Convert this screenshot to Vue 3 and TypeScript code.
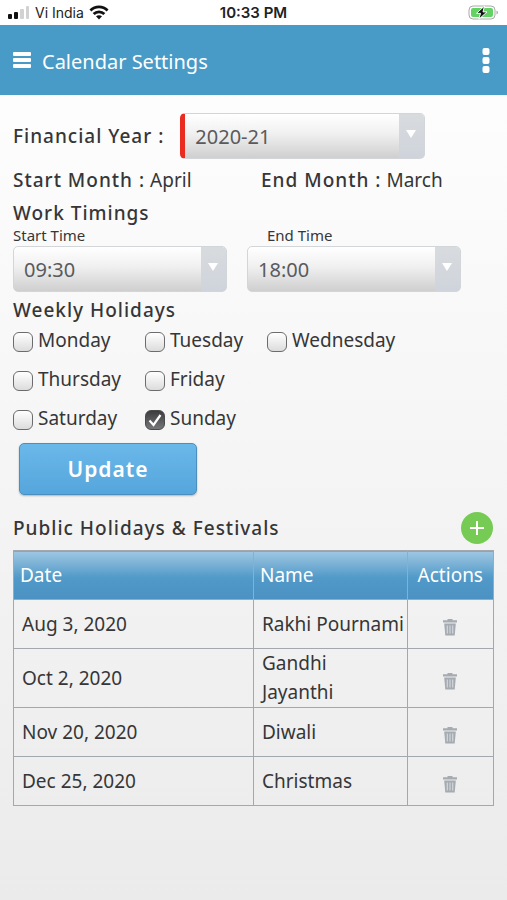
<script setup lang="ts">
import { ref } from 'vue'

interface Day {
  name: string
  checked: boolean
}

interface Holiday {
  date: string
  name: string
}

const year = ref('2020-21')
const startTime = ref('09:30')
const endTime = ref('18:00')

const days = ref<Day[]>([
  { name: 'Monday', checked: false },
  { name: 'Tuesday', checked: false },
  { name: 'Wednesday', checked: false },
  { name: 'Thursday', checked: false },
  { name: 'Friday', checked: false },
  { name: 'Saturday', checked: false },
  { name: 'Sunday', checked: true },
])

const holidays = ref<Holiday[]>([
  { date: 'Aug 3, 2020', name: 'Rakhi Pournami' },
  { date: 'Oct 2, 2020', name: 'Gandhi\nJayanthi' },
  { date: 'Nov 20, 2020', name: 'Diwali' },
  { date: 'Dec 25, 2020', name: 'Christmas' },
])

function removeHoliday(index: number): void {
  holidays.value.splice(index, 1)
}
</script>

<template>
  <div class="screen">
    <div class="status">
      <div class="carrier">
        <svg class="signal" width="22" height="14" viewBox="0 0 22 14">
          <rect x="0" y="8" width="4" height="5" rx="1" fill="#111" />
          <rect x="6" y="6" width="4" height="7" rx="1" fill="#111" />
          <rect x="12" y="3" width="4" height="10" rx="1" fill="#d2d2d2" />
          <rect x="18" y="0" width="3" height="13" rx="1" fill="#d2d2d2" />
        </svg>
        <span>Vi India</span>
        <svg class="wifi" width="20" height="15" viewBox="0 0 18 14" fill="none" stroke="#111" stroke-width="2.6">
          <path d="M1 5.2C5.5.6 12.5.6 17 5.2" />
          <path d="M4 8.5C6.8 5.700 11.2 5.700 14 8.5" />
          <path d="M9 13.5 6.2 10.6C7.8 9.2 10.2 9.2 11.8 10.6Z" fill="#111" stroke="none" />
        </svg>
      </div>
      <span class="clock">10:33 PM</span>
      <svg class="battery" width="31" height="15" viewBox="0 0 31 15">
        <rect x="1" y="1" width="26" height="13" rx="4" fill="#fff" stroke="#a9a9a9" />
        <rect x="3" y="3" width="22" height="9" rx="2" fill="#62d263" />
        <path d="M28.5 5.5v4q1.5-.5 1.5-2t-1.500-2Z" fill="#a9a9a9" />
        <path d="M16.500 1 8.500 8.300h4l-1.700 6 8.200-7.400h-4Z" fill="#111" stroke="#fff" stroke-width="1" />
      </svg>
    </div>

    <header class="bar">
      <button class="icon-btn" type="button" aria-label="Menu">
        <svg width="18" height="16" viewBox="0 0 18 16" fill="#fff">
          <rect y="0" width="18" height="4" rx="1" />
          <rect y="6" width="18" height="4" rx="1" />
          <rect y="12" width="18" height="4" rx="1" />
        </svg>
      </button>
      <h1>Calendar Settings</h1>
      <button class="icon-btn more" type="button" aria-label="More options">
        <svg width="8" height="25" viewBox="0 0 8 25" fill="#fff">
          <rect x="0.500" y="0" width="7" height="7" rx="2" />
          <rect x="0.500" y="9" width="7" height="7" rx="2" />
          <rect x="0.500" y="18" width="7" height="7" rx="2" />
        </svg>
      </button>
    </header>

    <main>
      <div class="year-row">
        <label class="strong" for="year">Financial Year :</label>
        <div class="select required">
          <select id="year" v-model="year">
            <option>2020-21</option>
          </select>
          <span class="arrow"></span>
        </div>
      </div>

      <div class="months">
        <p><span class="strong">Start Month :</span> April</p>
        <p><span class="strong">End Month :</span> March</p>
      </div>

      <h2>Work Timings</h2>
      <div class="times">
        <div class="time">
          <label for="start">Start Time</label>
          <div class="select">
            <select id="start" v-model="startTime">
              <option>09:30</option>
            </select>
            <span class="arrow"></span>
          </div>
        </div>
        <div class="time">
          <label class="inset" for="end">End Time</label>
          <div class="select">
            <select id="end" v-model="endTime">
              <option>18:00</option>
            </select>
            <span class="arrow"></span>
          </div>
        </div>
      </div>

      <h2>Weekly Holidays</h2>
      <div class="days">
        <label v-for="day in days" :key="day.name" :class="['day', day.name.toLowerCase()]">
          <span class="box">
            <input v-model="day.checked" type="checkbox" />
            <svg v-if="day.checked" class="tick" width="20" height="20" viewBox="0 0 20 20" aria-hidden="true">
              <path d="M4.500 10.500 8.500 15 15.500 5" fill="none" stroke="#fff" stroke-width="2.200" />
            </svg>
          </span>
          <span>{{ day.name }}</span>
        </label>
      </div>

      <button class="update" type="button">Update</button>

      <div class="list-head">
        <h2>Public Holidays &amp; Festivals</h2>
        <button class="add" type="button" aria-label="Add holiday">
          <svg width="16" height="16" viewBox="0 0 16 16" stroke="#fff" stroke-width="2">
            <path d="M8 1v14M1 8h14" />
          </svg>
        </button>
      </div>

      <table>
        <colgroup>
          <col class="c-date" />
          <col class="c-name" />
          <col class="c-act" />
        </colgroup>
        <thead>
          <tr>
            <th>Date</th>
            <th>Name</th>
            <th class="act">Actions</th>
          </tr>
        </thead>
        <tbody>
          <tr v-for="(holiday, i) in holidays" :key="holiday.date">
            <td>{{ holiday.date }}</td>
            <td class="name">{{ holiday.name }}</td>
            <td class="act">
              <button class="trash" type="button" :aria-label="'Delete ' + holiday.name" @click="removeHoliday(i)">
                <svg width="14" height="18" viewBox="0 0 14 18">
                  <path d="M4.500 2.300V1h5v1.300H14V4.500H0V2.300Z" fill="#a5abb1" />
                  <path d="M1.200 5.500h11.600L11.700 17.500H2.300Z" fill="#a5abb1" />
                  <path d="M4.300 7.500v8M7 7.500v8M9.700 7.500v8" stroke="#d5dade" stroke-width="1.100" />
                </svg>
              </button>
            </td>
          </tr>
        </tbody>
      </table>
    </main>
  </div>
</template>

<style>
body {
  margin: 0;
}
</style>

<style scoped>
.screen {
  min-height: 100vh;
  box-sizing: border-box;
  background: linear-gradient(#fff, #fdfdfd 12%, #ebebeb);
  color: #363638;
  font: 19px/29px 'Noto Sans', 'Open Sans', sans-serif;
}

h1,
h2,
p {
  margin: 0;
}

button,
select {
  font: inherit;
  color: inherit;
  margin: 0;
}

.status {
  display: grid;
  grid-template-columns: 1fr auto 1fr;
  align-items: center;
  height: 25px;
  padding: 0 8px;
  background: #fff;
  color: #222;
  font: 14px/25px Inter, 'Liberation Sans', sans-serif;
}

.carrier {
  display: flex;
  align-items: center;
  gap: 5px;
}

.clock {
  font-size: 15px;
  font-weight: 600;
}

.battery {
  justify-self: end;
}

.bar {
  display: flex;
  align-items: center;
  height: 70px;
  padding: 0 17px 0 13px;
  background: #489bc7;
  color: #fff;
}

.icon-btn {
  display: flex;
  padding: 0;
  border: 0;
  background: none;
}

.bar h1 {
  margin-left: 11px;
  padding-top: 3px;
  font-size: 20px;
  font-weight: 400;
}

.more {
  margin-left: auto;
}

main {
  padding: 18px 13px;
}

h2,
.strong {
  font-size: 19px;
  font-weight: 500;
  letter-spacing: 1px;
}

h2 {
  line-height: 22px;
}

.year-row {
  display: flex;
  align-items: center;
  gap: 16px;
}

.year-row .select {
  width: 245px;
}

.select {
  position: relative;
  height: 46px;
}

.select select {
  width: 100%;
  height: 100%;
  padding: 0 30px 0 10px;
  border: 1px solid #d3d6d9;
  border-radius: 5px;
  appearance: none;
  background: linear-gradient(#fff, #f0f0f0 45%, #cfcfcf);
  color: #5a5a5c;
  font-size: 20px;
}

.required select {
  border-left: 5px solid #ea2c20;
}

.arrow {
  position: absolute;
  top: 1px;
  right: 1px;
  bottom: 1px;
  width: 25px;
  border-radius: 0 4px 4px 0;
  background: linear-gradient(#d8dbde, #cfd4dc);
  pointer-events: none;
}

.arrow::after {
  content: '';
  position: absolute;
  top: 16px;
  left: 7px;
  border: 5px solid transparent;
  border-top: 8px solid #fff;
  border-bottom: 0;
}

.months {
  display: grid;
  grid-template-columns: 248px 1fr;
  padding: 7px 0;
}

.times {
  display: grid;
  grid-template-columns: 214px 214px;
  gap: 20px;
  padding-bottom: 7px;
}

.time label {
  display: block;
  height: 22px;
  font-size: 15px;
  line-height: 22px;
}

.time .inset {
  padding-left: 20px;
}

.days {
  display: grid;
  grid-template-columns: 132px 122px 1fr;
  grid-auto-rows: 39px;
  padding-bottom: 5px;
}

.day {
  display: flex;
  align-items: center;
  gap: 5px;
}

.box {
  position: relative;
  flex: none;
  width: 20px;
  height: 20px;
  margin-top: 3px;
}

.box input {
  display: block;
  box-sizing: border-box;
  width: 20px;
  height: 20px;
  margin: 0;
  border: 1px solid #6c6c6e;
  border-radius: 6px;
  appearance: none;
  background: linear-gradient(#fff, #dcdcdc);
}

.box input:checked {
  border-color: #4a4a4c;
  background: linear-gradient(#3c3c3e, #77777a);
}

.tick {
  position: absolute;
  inset: 0;
  pointer-events: none;
}

.thursday,
.saturday {
  grid-column: 1;
}

.update {
  display: block;
  width: 178px;
  height: 52px;
  margin-left: 6px;
  border: 1px solid #4a8fc0;
  border-radius: 5px;
  background: linear-gradient(#6bb8ea, #55a6dc);
  box-shadow: 0 1px 2px #0004;
  color: #fff;
  font-size: 21px;
  font-weight: 600;
  letter-spacing: 1px;
}

.list-head {
  display: flex;
  align-items: center;
  justify-content: space-between;
  padding: 17px 1px 6px 0;
}

.add {
  display: flex;
  align-items: center;
  justify-content: center;
  width: 32px;
  height: 32px;
  padding: 0;
  border: 0;
  border-radius: 50%;
  background: #76cb55;
}

table {
  width: 100%;
  table-layout: fixed;
  border-collapse: collapse;
}

.c-date {
  width: 50%;
}

.c-name {
  width: 32%;
}

.c-act {
  width: 18%;
}

th,
td {
  box-sizing: border-box;
  height: 49px;
  padding: 0 0 0 8px;
  border: 1px solid #a3a8ae;
  text-align: left;
  font-weight: 400;
}

.name {
  white-space: pre-line;
}

th {
  padding-left: 6px;
  background: linear-gradient(#9fc7e2, #5199c8 55%, #4b92c3);
  color: #fff;
}

th.act,
td.act {
  padding: 0;
  text-align: center;
}

.trash {
  display: inline-flex;
  padding: 3px 0 0;
  border: 0;
  background: none;
  vertical-align: middle;
}
</style>
